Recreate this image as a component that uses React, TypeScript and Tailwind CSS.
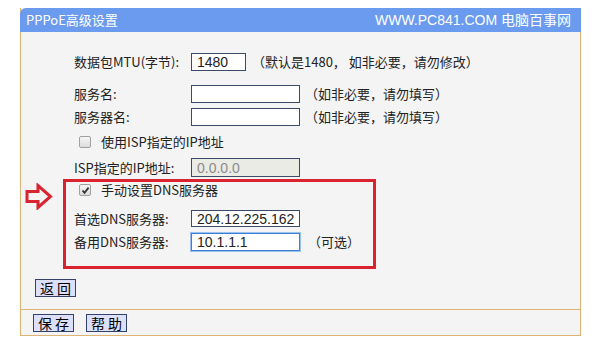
const cn = { fontFamily: '"Noto Sans CJK SC", "Liberation Sans", sans-serif' }
const ar = { fontFamily: '"Liberation Sans", Arial, sans-serif' }

function Box({ value = "", gray = false, focus = false, w = "w-[109px]", h = "h-[18px]" }: { value?: string; gray?: boolean; focus?: boolean; w?: string; h?: string }) {
  return (
    <div
      style={ar}
      className={`${w} ${h} flex items-center px-[5px] text-[14px] leading-none border ${
        focus ? "border-[#3c7fd8] shadow-[0_0_0_1px_#9cc0ee]" : "border-[#3a4a68]"
      } ${gray ? "bg-[#ebebe6] text-[#8a8a8a]" : "bg-white text-[#222]"}`}
    >
      {value}
    </div>
  )
}

function Check({ checked = false }: { checked?: boolean }) {
  return (
    <span className="w-[12px] h-[12px] rounded-[2px] border border-[#a0a0a0] bg-gradient-to-b from-[#f6f6f6] to-[#dcdcdc] flex items-center justify-center">
      {checked && (
        <svg width="9" height="9" viewBox="0 0 9 9">
          <path d="M1.5 4.5 L3.5 6.8 L7.6 1.6" fill="none" stroke="#333" strokeWidth="1.8" />
        </svg>
      )}
    </span>
  )
}

function Btn({ label }: { label: string }) {
  return (
    <div
      style={cn}
      className="w-[41px] h-[18px] flex items-center justify-center bg-[#dde0fb] border border-[#34426b] text-[14px] tracking-[3px] pl-[3px] text-black leading-none"
    >
      {label}
    </div>
  )
}

export default function App() {
  return (
    <div className="w-[600px] h-[358px] bg-white pt-[8px] pl-[20px] text-[13px] text-[#222]" style={cn}>
      <div className="w-[561px] border-x border-b border-[#dfb374] bg-[#f4f4f4]">
        {/* HEADER */}
        <div className="h-[24px] -mx-px bg-[#6b9bef] rounded-tl-[6px] flex items-center justify-between pl-[6px] pr-[10px] text-white">
          <span className="text-[13px]">PPPoE高级设置</span>
          <span className="text-[14px]" style={ar}>
            WWW.PC841.COM <span style={cn} className="text-[14px]">电脑百事网</span>
          </span>
        </div>

        {/* CONTENT */}
        <div className="h-[277px] flex flex-col pl-[53px]">
          <div className="mt-[21px] h-[18px] flex items-center">
            <span className="w-[117px]">数据包MTU(字节):</span>
            <Box value="1480" w="w-[55px]" />
            <span className="ml-[6px]">（默认是1480， 如非必要，请勿修改）</span>
          </div>
          <div className="mt-[14px] h-[18px] flex items-center">
            <span className="w-[117px]">服务名:</span>
            <Box />
            <span className="ml-[5px]">（如非必要，请勿填写）</span>
          </div>
          <div className="mt-[5px] h-[18px] flex items-center">
            <span className="w-[117px]">服务器名:</span>
            <Box />
            <span className="ml-[5px]">（如非必要，请勿填写）</span>
          </div>
          <div className="mt-[7px] h-[18px] flex items-center pl-[5px]">
            <Check />
            <span className="ml-[10px]">使用ISP指定的IP地址</span>
          </div>
          <div className="mt-[7px] h-[19px] flex items-center">
            <span className="w-[117px]">ISP指定的IP地址:</span>
            <Box value="0.0.0.0" gray h="h-[19px]" />
          </div>

          <div className="mt-[2px] -ml-[53px] flex">
            <div className="w-[42px] flex items-start pl-[4px] pt-[4px]">
              <svg width="28" height="27" viewBox="0 0 28 27">
                <path d="M2 8.5 H13 V2.5 L25.5 13.5 L13 24.5 V18.5 H2 Z" fill="none" stroke="#d9232e" strokeWidth="3" strokeLinejoin="miter" />
              </svg>
            </div>
            <div className="w-[313px] h-[90px] border-[3px] border-[#d9232e] flex flex-col pl-[8px]">
              <div className="mt-[-1px] h-[18px] flex items-center pl-[5px]">
                <Check checked />
                <span className="ml-[10px]">手动设置DNS服务器</span>
              </div>
              <div className="mt-[11px] h-[17px] flex items-center">
                <span className="w-[117px]">首选DNS服务器:</span>
                <Box value="204.12.225.162" h="h-[17px]" />
              </div>
              <div className="mt-[6px] h-[18px] flex items-center">
                <span className="w-[117px]">备用DNS服务器:</span>
                <Box value="10.1.1.1" focus />
                <span className="ml-[8px]">（可选）</span>
              </div>
            </div>
          </div>

          <div className="mt-[10px] -ml-[39px]">
            <Btn label="返回" />
          </div>
        </div>

        {/* FOOTER */}
        <div className="h-[26px] border-t border-[#dfb374] flex items-center gap-[12px] pl-[12px]">
          <Btn label="保存" />
          <Btn label="帮助" />
        </div>
      </div>
    </div>
  )
}
